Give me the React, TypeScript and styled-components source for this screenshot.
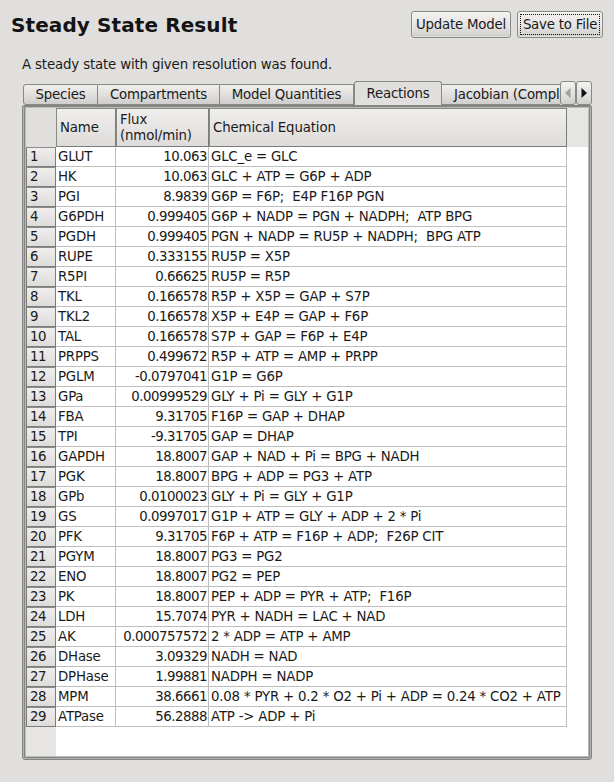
import React from "react";
import styled, { createGlobalStyle } from "styled-components";

const GlobalStyle = createGlobalStyle`
  * { box-sizing: border-box; }
  body {
    margin: 0;
    background: #e0dfdd;
    color: #1a1a1a;
    font-family: "DejaVu Sans", sans-serif;
    font-size: 13.33px;
    letter-spacing: -0.2px;
    line-height: 16px;
  }
`;

const Window = styled.main`
  width: 614px;
  height: 782px;
  padding: 11px 11px 0;
  overflow: hidden;
  background: #e0dfdd;
`;

const Header = styled.header`
  display: flex;
  justify-content: space-between;
  height: 27px;
`;

const Title = styled.h1`
  margin: 0;
  font-size: 20px;
  line-height: 29px;
  letter-spacing: 0.1px;
  font-weight: bold;
  color: #141414;
  white-space: nowrap;
`;

const Actions = styled.div`
  display: flex;
  gap: 6px;
`;

const Button = styled.button<{ $width: number }>`
  width: ${(p) => p.$width}px;
  height: 27px;
  padding: 2px;
  border: 1px solid #888886;
  border-radius: 3px;
  background: linear-gradient(#f3f2f1, #e5e4e3 55%, #cfcecc);
  box-shadow: inset 0 0 0 1px rgba(255, 255, 255, 0.35);
  font: inherit;
  letter-spacing: -0.22px;
  color: inherit;
  white-space: nowrap;
`;

const ButtonLabel = styled.span<{ $focused?: boolean }>`
  display: flex;
  align-items: center;
  justify-content: center;
  height: 21px;
  border: 1px ${(p) => (p.$focused ? "dotted #111" : "solid transparent")};
`;

const Message = styled.p`
  margin: 19px 0 0 11px;
  height: 16px;
  letter-spacing: -0.15px;
`;

const TabBar = styled.nav`
  display: flex;
  align-items: flex-end;
  width: 569px;
  height: 24px;
  margin: 8px 0 0 12px;
`;

const Tab = styled.div<{ $width: number; $active?: boolean; $first?: boolean; $cut?: boolean }>`
  flex: none;
  width: ${(p) => p.$width}px;
  height: ${(p) => (p.$active ? 24 : 21)}px;
  padding-top: ${(p) => (p.$active ? 4 : 2)}px;
  padding-left: ${(p) => (p.$cut ? 12 : 0)}px;
  border: 1px solid #888886;
  border-left-width: ${(p) => (p.$first || p.$active ? 1 : 0)}px;
  border-right-width: ${(p) => (p.$cut ? 0 : 1)}px;
  border-bottom-width: ${(p) => (p.$active ? 0 : 1)}px;
  border-radius: ${(p) => (p.$active ? "3px 3px 0 0" : p.$first ? "3px 0 0 3px" : "0")};
  background: ${(p) => (p.$active ? "#e0dfdd" : "linear-gradient(#f0efee, #dfdedc 55%, #cfcecc)")};
  text-align: ${(p) => (p.$cut ? "left" : "center")};
  white-space: nowrap;
  overflow: hidden;
`;

const ScrollButton = styled.button`
  display: flex;
  flex: none;
  align-items: center;
  justify-content: center;
  align-self: flex-start;
  width: 16px;
  height: 24px;
  padding: 0 0 1px;
  border: 1px solid #888886;
  border-radius: 3px;
  background: linear-gradient(#f3f2f1, #e2e1e0 55%, #d0cfcd);
`;

const Pane = styled.section`
  width: 570px;
  height: 655px;
  margin-left: 11px;
  border: 1px solid #848482;
  border-radius: 2px 2px 3px 3px;
  background: #b2b2b0;
  padding: 0 1px 1px;
`;

const PaneInner = styled.div`
  height: 100%;
  border: 1px solid #848482;
  border-radius: 1px;
  background: #bcbcba;
  padding: 1px 1px 1px;
`;

const Viewport = styled.div`
  height: 100%;
  background: linear-gradient(90deg, #e6e5e4 30px, transparent 30px),
    linear-gradient(#e6e5e4 39px, #fff 39px);
`;

const Grid = styled.div`
  display: grid;
  grid-template-columns: 30px 60px 93px 358px;
  grid-template-rows: 39px repeat(29, 20px);
`;

const Corner = styled.div`
  background: #e0dfdd;
`;

const ColumnHeader = styled.div`
  display: flex;
  align-items: center;
  padding-left: 3px;
  border-top: 1px solid #888886;
  border-right: 1px solid #7c7c7a;
  border-bottom: 1px solid #7c7c7a;
  border-left: 1px solid #888886;
  background: linear-gradient(#efeeed, #dddcda);
  letter-spacing: -0.14px;
  white-space: pre-line;
`;

const RowHeader = styled.div`
  padding: 1px 0 0 3px;
  border: 1px solid #7c7c7a;
  border-top-color: #8c8c8a;
  background: linear-gradient(#efeeed, #dddcda);
  letter-spacing: -0.48px;
`;

const Cell = styled.div<{ $numeric?: boolean }>`
  padding: 2px ${(p) => (p.$numeric ? 1 : 2)}px 0 2px;
  border-right: 1px solid #bfbfbf;
  border-bottom: 1px solid #bfbfbf;
  background: #fff;
  text-align: ${(p) => (p.$numeric ? "right" : "left")};
  letter-spacing: ${(p) => (p.$numeric ? -0.48 : -0.2)}px;
  white-space: pre;
`;

const reactions: [string, string, string][] = [
  ["GLUT", "10.063", "GLC_e = GLC"],
  ["HK", "10.063", "GLC + ATP = G6P + ADP"],
  ["PGI", "8.9839", "G6P = F6P;  E4P F16P PGN"],
  ["G6PDH", "0.999405", "G6P + NADP = PGN + NADPH;  ATP BPG"],
  ["PGDH", "0.999405", "PGN + NADP = RU5P + NADPH;  BPG ATP"],
  ["RUPE", "0.333155", "RU5P = X5P"],
  ["R5PI", "0.66625", "RU5P = R5P"],
  ["TKL", "0.166578", "R5P + X5P = GAP + S7P"],
  ["TKL2", "0.166578", "X5P + E4P = GAP + F6P"],
  ["TAL", "0.166578", "S7P + GAP = F6P + E4P"],
  ["PRPPS", "0.499672", "R5P + ATP = AMP + PRPP"],
  ["PGLM", "-0.0797041", "G1P = G6P"],
  ["GPa", "0.00999529", "GLY + Pi = GLY + G1P"],
  ["FBA", "9.31705", "F16P = GAP + DHAP"],
  ["TPI", "-9.31705", "GAP = DHAP"],
  ["GAPDH", "18.8007", "GAP + NAD + Pi = BPG + NADH"],
  ["PGK", "18.8007", "BPG + ADP = PG3 + ATP"],
  ["GPb", "0.0100023", "GLY + Pi = GLY + G1P"],
  ["GS", "0.0997017", "G1P + ATP = GLY + ADP + 2 * Pi"],
  ["PFK", "9.31705", "F6P + ATP = F16P + ADP;  F26P CIT"],
  ["PGYM", "18.8007", "PG3 = PG2"],
  ["ENO", "18.8007", "PG2 = PEP"],
  ["PK", "18.8007", "PEP + ADP = PYR + ATP;  F16P"],
  ["LDH", "15.7074", "PYR + NADH = LAC + NAD"],
  ["AK", "0.000757572", "2 * ADP = ATP + AMP"],
  ["DHase", "3.09329", "NADH = NAD"],
  ["DPHase", "1.99881", "NADPH = NADP"],
  ["MPM", "38.6661", "0.08 * PYR + 0.2 * O2 + Pi + ADP = 0.24 * CO2 + ATP"],
  ["ATPase", "56.2888", "ATP -> ADP + Pi"],
];

export default function App() {
  return (
    <Window>
      <GlobalStyle />
      <Header>
        <Title>Steady State Result</Title>
        <Actions>
          <Button $width={100}>
            <ButtonLabel>Update Model</ButtonLabel>
          </Button>
          <Button $width={86}>
            <ButtonLabel $focused>Save to File</ButtonLabel>
          </Button>
        </Actions>
      </Header>
      <Message>A steady state with given resolution was found.</Message>
      <TabBar>
        <Tab $width={75} $first>Species</Tab>
        <Tab $width={122}>Compartments</Tab>
        <Tab $width={134}>Model Quantities</Tab>
        <Tab $width={88} $active>Reactions</Tab>
        <Tab $width={118} $cut>Jacobian (Compl</Tab>
        <ScrollButton aria-label="Scroll tabs left">
          <svg width="6" height="10" viewBox="0 0 6 10"><path d="M5.5 0v10L0 5z" fill="#a0a09e" /></svg>
        </ScrollButton>
        <ScrollButton aria-label="Scroll tabs right">
          <svg width="6" height="10" viewBox="0 0 6 10"><path d="M.5 0v10L6 5z" fill="#111" /></svg>
        </ScrollButton>
      </TabBar>
      <Pane>
        <PaneInner>
          <Viewport>
            <Grid>
              <Corner />
              <ColumnHeader>Name</ColumnHeader>
              <ColumnHeader>{"Flux\n(nmol/min)"}</ColumnHeader>
              <ColumnHeader>Chemical Equation</ColumnHeader>
              {reactions.map(([name, flux, equation], i) => (
                <React.Fragment key={name}>
                  <RowHeader>{i + 1}</RowHeader>
                  <Cell>{name}</Cell>
                  <Cell $numeric>{flux}</Cell>
                  <Cell>{equation}</Cell>
                </React.Fragment>
              ))}
            </Grid>
          </Viewport>
        </PaneInner>
      </Pane>
    </Window>
  );
}
